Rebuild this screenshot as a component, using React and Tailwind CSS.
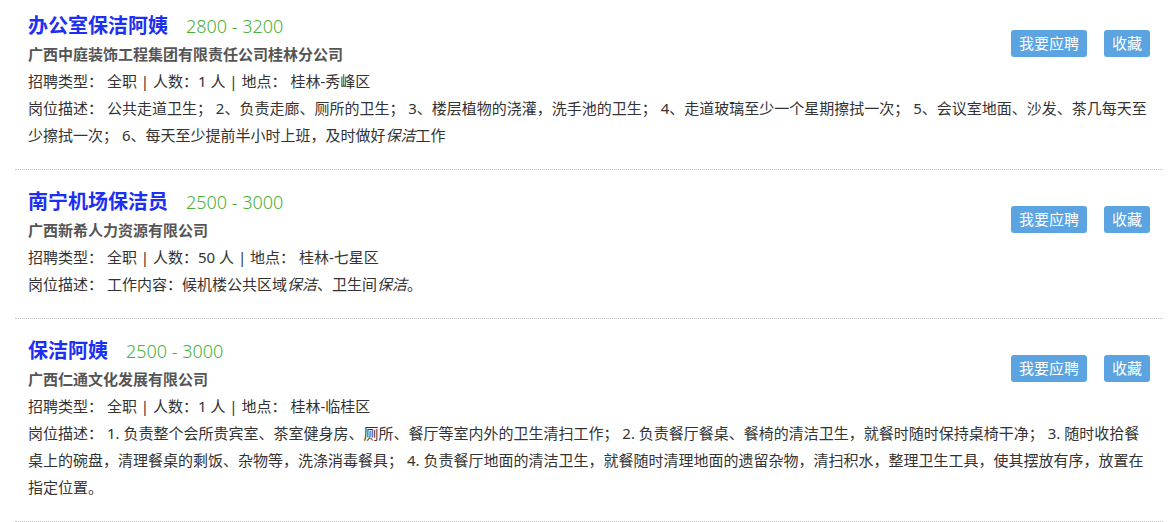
const jobs = [
  {
    title: "办公室保洁阿姨",
    salary: "2800 - 3200",
    company: "广西中庭装饰工程集团有限责任公司桂林分公司",
    count: "1",
    place: "桂林-秀峰区",
    desc: (
      <>
        公共走道卫生； 2、负责走廊、厕所的卫生； 3、楼层植物的浇灌，洗手池的卫生； 4、走道玻璃至少一个星期擦拭一次； 5、会议室地面、沙发、茶几每天至少擦拭一次； 6、每天至少提前半小时上班，及时做好<em>保洁</em>工作
      </>
    ),
  },
  {
    title: "南宁机场保洁员",
    salary: "2500 - 3000",
    company: "广西新希人力资源有限公司",
    count: "50",
    place: "桂林-七星区",
    desc: (
      <>
        工作内容：候机楼公共区域<em>保洁</em>、卫生间<em>保洁</em>。
      </>
    ),
  },
  {
    title: "保洁阿姨",
    salary: "2500 - 3000",
    company: "广西仁通文化发展有限公司",
    count: "1",
    place: "桂林-临桂区",
    desc: (
      <>
        1. 负责整个会所贵宾室、茶室健身房、厕所、餐厅等室内外的卫生清扫工作； 2. 负责餐厅餐桌、餐椅的清洁卫生，就餐时随时保持桌椅干净； 3. 随时收拾餐桌上的碗盘，清理餐桌的剩饭、杂物等，洗涤消毒餐具； 4. 负责餐厅地面的清洁卫生，就餐随时清理地面的遗留杂物，清扫积水，整理卫生工具，使其摆放有序，放置在指定位置。
      </>
    ),
  },
];

export default function App() {
  return (
    <div
      className="bg-white min-h-[522px] overflow-hidden"
      style={{ fontFamily: '"Noto Sans", "Noto Sans CJK SC", sans-serif' }}
    >
      <div className="w-[1148px] ml-[15px] -mt-[6px]">
        {jobs.map((job, i) => (
          <div
            key={i}
            className="border-b border-dotted border-[#c4c4c4] px-[13px] pt-[17px] pb-5"
          >
            <div className="float-right mt-[19px] flex gap-[17px]">
              <button className="h-[27px] px-2 rounded-[3px] bg-[#5ba4e1] text-white text-[15px] leading-[27px]">
                我要应聘
              </button>
              <button className="h-[27px] px-2 rounded-[3px] bg-[#5ba4e1] text-white text-[15px] leading-[27px]">
                收藏
              </button>
            </div>
            <div className="flex items-baseline h-[30px] leading-[30px]">
              <span className="text-[20px] font-bold text-[#1d2ff2]">{job.title}</span>
              <span className="ml-[18px] text-[18px] font-light text-[#47b23a]">{job.salary}</span>
            </div>
            <div className="text-[15px] leading-[27px] font-bold text-[#555]">{job.company}</div>
            <div className="text-[15px] leading-[27px] text-[#333]">
              招聘类型： 全职 | 人数：{job.count} 人 | 地点： {job.place}
            </div>
            <div className="text-[15px] leading-[27px] text-[#333]">
              岗位描述： {job.desc}
            </div>
          </div>
        ))}
      </div>
    </div>
  );
}
